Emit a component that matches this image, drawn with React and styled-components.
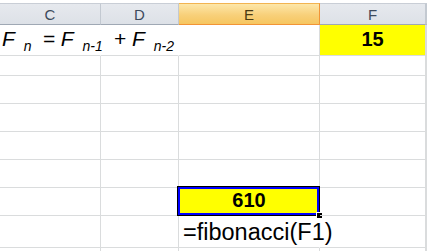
import React from 'react';
import styled, { createGlobalStyle } from 'styled-components';

const GlobalStyle = createGlobalStyle`
  html, body {
    margin: 0;
    padding: 0;
    background: #fff;
    overflow: hidden;
  }
  body {
    font-family: "Liberation Sans", Arial, sans-serif;
  }
`;

const GRID = '#dadcdd';

const Sheet = styled.div`
  display: grid;
  grid-template-columns: 101px 78px 141px 106px 1fr;
  grid-template-rows: 22px 31px 20px 28px 28px 28px 28px 28px 32px 20px;
  padding-top: 3px;
  width: 427px;
  height: 251px;
  box-sizing: border-box;
  overflow: hidden;
`;

const ColHead = styled.div`
  box-sizing: border-box;
  display: flex;
  align-items: center;
  justify-content: center;
  font-size: 15px;
  color: ${p => (p.$active ? '#4a3a12' : '#3d4a5c')};
  background: ${p =>
    p.$active
      ? 'linear-gradient(#fde7a9, #f8d07a 55%, #f6c660)'
      : 'linear-gradient(#e6e9ee, #dde1e7)'};
  border-top: 1px solid ${p => (p.$active ? '#f2b451' : '#c9ced6')};
  border-right: 1px solid ${p => (p.$active ? '#f29436' : '#c3c9d1')};
  border-bottom: 1px solid ${p => (p.$active ? '#f29436' : '#9fa8b4')};
`;

const Cell = styled.div`
  position: relative;
  box-sizing: border-box;
  border-right: 1px solid ${p => (p.$overflow ? 'transparent' : GRID)};
  border-bottom: 1px solid ${GRID};
  background: ${p => p.$fill || 'transparent'};
  display: flex;
  align-items: flex-end;
  justify-content: ${p => (p.$center ? 'center' : 'flex-start')};
  white-space: nowrap;
  overflow: visible;
  z-index: ${p => (p.$overflow ? 2 : 1)};
`;

const Formula = styled.div`
  font-style: italic;
  font-size: 21px;
  color: #000;
  padding: 0 0 6px 2px;
  line-height: 1;
  display: flex;
  align-items: baseline;
`;

const Sub = styled.span`
  font-size: 14px;
  position: relative;
  top: 5px;
  margin: 0 11px 0 9px;
`;

const Value = styled.span`
  font-weight: bold;
  font-size: 20px;
  line-height: 1;
  padding-bottom: ${p => p.$pb || 6}px;
  color: #000;
`;

const Text = styled.span`
  font-size: 23.5px;
  line-height: 1;
  padding: 0 0 3px 4px;
  color: #000;
`;

const Selection = styled.div`
  position: absolute;
  left: -2px;
  top: -2px;
  right: -1px;
  bottom: -1px;
  border: 1px solid #000;
  box-shadow: inset 0 0 0 2px #0000ff;
  pointer-events: none;
`;

const FillHandle = styled.div`
  position: absolute;
  right: -4px;
  bottom: -4px;
  width: 5px;
  height: 5px;
  background: #000;
  border: 1px solid #fff;
  z-index: 3;
`;

const cols = ['C', 'D', 'E', 'F', ''];

export default function App() {
  const blank = (key, n = 5) =>
    Array.from({ length: n }, (_, i) => <Cell key={`${key}-${i}`} />);

  return (
    <>
      <GlobalStyle />
      <Sheet>
        {cols.map(c => (
          <ColHead key={c || 'next'} $active={c === 'E'}>
            {c}
          </ColHead>
        ))}

        {/* row 1 */}
        <Cell $overflow>
          <Formula>
            F<Sub>n</Sub>= F<Sub>n-1</Sub>+ F<Sub>n-2</Sub>
          </Formula>
        </Cell>
        <Cell $overflow />
        <Cell />
        <Cell $fill="#ffff00" $center>
          <Value>15</Value>
        </Cell>
        <Cell />

        {blank('r2')}
        {blank('r3')}
        {blank('r4')}
        {blank('r5')}
        {blank('r6')}

        {/* row 7 */}
        <Cell />
        <Cell />
        <Cell $fill="#ffff00" $center>
          <Value $pb={5}>610</Value>
          <Selection />
          <FillHandle />
        </Cell>
        <Cell />
        <Cell />

        {/* row 8 */}
        <Cell />
        <Cell />
        <Cell $overflow>
          <Text>=fibonacci(F1)</Text>
        </Cell>
        <Cell />
        <Cell />

        {blank('r9')}
      </Sheet>
    </>
  );
}
